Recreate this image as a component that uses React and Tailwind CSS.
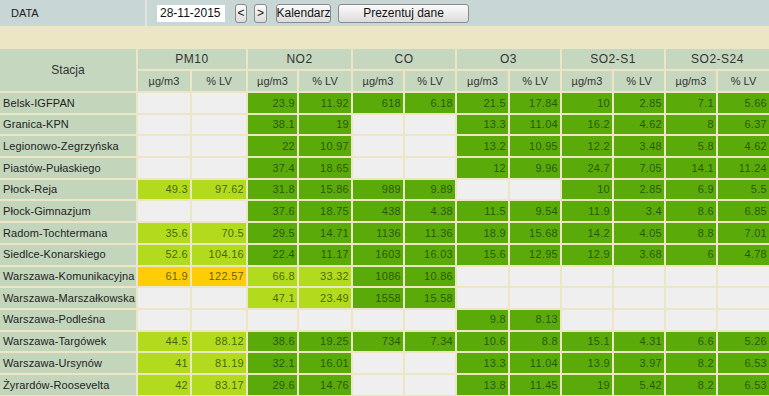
import React from "react";

const rows = [
  ["Belsk-IGFPAN", null, ["23.9", "11.92", "G"], ["618", "6.18", "G"], ["21.5", "17.84", "G"], ["10", "2.85", "G"], ["7.1", "5.66", "G"]],
  ["Granica-KPN", null, ["38.1", "19", "G"], null, ["13.3", "11.04", "G"], ["16.2", "4.62", "G"], ["8", "6.37", "G"]],
  ["Legionowo-Zegrzyńska", null, ["22", "10.97", "G"], null, ["13.2", "10.95", "G"], ["12.2", "3.48", "G"], ["5.8", "4.62", "G"]],
  ["Piastów-Pułaskiego", null, ["37.4", "18.65", "G"], null, ["12", "9.96", "G"], ["24.7", "7.05", "G"], ["14.1", "11.24", "G"]],
  ["Płock-Reja", ["49.3", "97.62", "L"], ["31.8", "15.86", "G"], ["989", "9.89", "G"], null, ["10", "2.85", "G"], ["6.9", "5.5", "G"]],
  ["Płock-Gimnazjum", null, ["37.6", "18.75", "G"], ["438", "4.38", "G"], ["11.5", "9.54", "G"], ["11.9", "3.4", "G"], ["8.6", "6.85", "G"]],
  ["Radom-Tochtermana", ["35.6", "70.5", "L"], ["29.5", "14.71", "G"], ["1136", "11.36", "G"], ["18.9", "15.68", "G"], ["14.2", "4.05", "G"], ["8.8", "7.01", "G"]],
  ["Siedlce-Konarskiego", ["52.6", "104.16", "L"], ["22.4", "11.17", "G"], ["1603", "16.03", "G"], ["15.6", "12.95", "G"], ["12.9", "3.68", "G"], ["6", "4.78", "G"]],
  ["Warszawa-Komunikacyjna", ["61.9", "122.57", "Y"], ["66.8", "33.32", "L"], ["1086", "10.86", "G"], null, null, null],
  ["Warszawa-Marszałkowska", null, ["47.1", "23.49", "L"], ["1558", "15.58", "G"], null, null, null],
  ["Warszawa-Podleśna", null, null, null, ["9.8", "8.13", "G"], null, null],
  ["Warszawa-Targówek", ["44.5", "88.12", "L"], ["38.6", "19.25", "G"], ["734", "7.34", "G"], ["10.6", "8.8", "G"], ["15.1", "4.31", "G"], ["6.6", "5.26", "G"]],
  ["Warszawa-Ursynów", ["41", "81.19", "L"], ["32.1", "16.01", "G"], null, ["13.3", "11.04", "G"], ["13.9", "3.97", "G"], ["8.2", "6.53", "G"]],
  ["Żyrardów-Roosevelta", ["42", "83.17", "L"], ["29.6", "14.76", "G"], null, ["13.8", "11.45", "G"], ["19", "5.42", "G"], ["8.2", "6.53", "G"]],
];

const groups = ["PM10", "NO2", "CO", "O3", "SO2-S1", "SO2-S24"];

const bg = {
  G: "bg-[#5aab0a]",
  L: "bg-[#b3db1e]",
  Y: "bg-[#ffcd05]",
  E: "bg-[#efeff0]",
};

function Btn({ children, className = "" }) {
  return (
    <div
      className={
        "h-[19px] flex items-center justify-center rounded-[3px] border border-[#8a8a8a] bg-gradient-to-b from-[#fbfbfb] to-[#dcdcdc] text-[12px] text-[#111] " +
        className
      }
    >
      {children}
    </div>
  );
}

export default function App() {
  return (
    <div
      className="w-[769px] h-[396px] overflow-hidden bg-[#ede6c4] text-[11px] text-[#333]"
      style={{ fontFamily: '"Liberation Sans", Arial, sans-serif' }}
    >
      {/* Top bar */}
      <div className="h-[26px] flex bg-[#dfe6de]">
        <div className="w-[145px] bg-[#c8d7d5] flex items-center pl-[11px] text-[11px] text-[#222]">
          DATA
        </div>
        <div className="flex-1 ml-[2px] bg-[#c8d7d5] flex items-center pl-[10px]">
          <div className="w-[68px] h-[17px] bg-white flex items-center pl-[3px] text-[12px] text-[#111]">
            28-11-2015
          </div>
          <Btn className="ml-[10px] w-[12px]">&lt;</Btn>
          <Btn className="ml-[7px] w-[13px]">&gt;</Btn>
          <Btn className="ml-[9px] w-[55px]">Kalendarz</Btn>
          <Btn className="ml-[7px] w-[131px]">Prezentuj dane</Btn>
        </div>
      </div>

      {/* Beige band */}
      <div className="h-[21px]" />

      {/* Table */}
      <div className="grid grid-cols-[136px_52px_54px_49px_52px_50px_50px_51px_50px_50px_50px_50px_51px] grid-rows-[20px_20px_repeat(14,19.7px)] gap-[2px] pt-[2px] bg-[#ede6c4]">
        <div className="row-span-2 bg-[#c5d8bf] flex items-center justify-center text-[12px] text-[#333]">
          Stacja
        </div>
        {groups.map((g) => (
          <div
            key={g}
            className="col-span-2 bg-[#c5d8bf] flex items-center justify-center text-[12px] text-[#333] tracking-[0.5px]"
          >
            {g}
          </div>
        ))}
        {groups.map((g) => (
          <React.Fragment key={g + "u"}>
            <div className="bg-[#c5d8bf] flex items-center justify-center text-[11px] text-[#333]">
              µg/m3
            </div>
            <div className="bg-[#c5d8bf] flex items-center justify-center text-[11px] text-[#333]">
              % LV
            </div>
          </React.Fragment>
        ))}
        {rows.map((r) => (
          <React.Fragment key={r[0]}>
            <div className="bg-[#c3d6bc] flex items-center pl-[3px] text-[11px] text-[#222] whitespace-nowrap tracking-[0.1px]">
              {r[0]}
            </div>
            {r.slice(1).map((c, i) => {
              const color = c ? bg[c[2]] : bg.E;
              return (
                <React.Fragment key={i}>
                  <div
                    className={
                      color +
                      " flex items-center justify-end pr-[2px] text-[11px] text-[#123000]/70 tracking-[0.3px] whitespace-nowrap"
                    }
                  >
                    {c ? c[0] : ""}
                  </div>
                  <div
                    className={
                      color +
                      " flex items-center justify-end pr-[2px] text-[11px] text-[#123000]/70 tracking-[0.3px] whitespace-nowrap"
                    }
                  >
                    {c ? c[1] : ""}
                  </div>
                </React.Fragment>
              );
            })}
          </React.Fragment>
        ))}
      </div>
    </div>
  );
}
